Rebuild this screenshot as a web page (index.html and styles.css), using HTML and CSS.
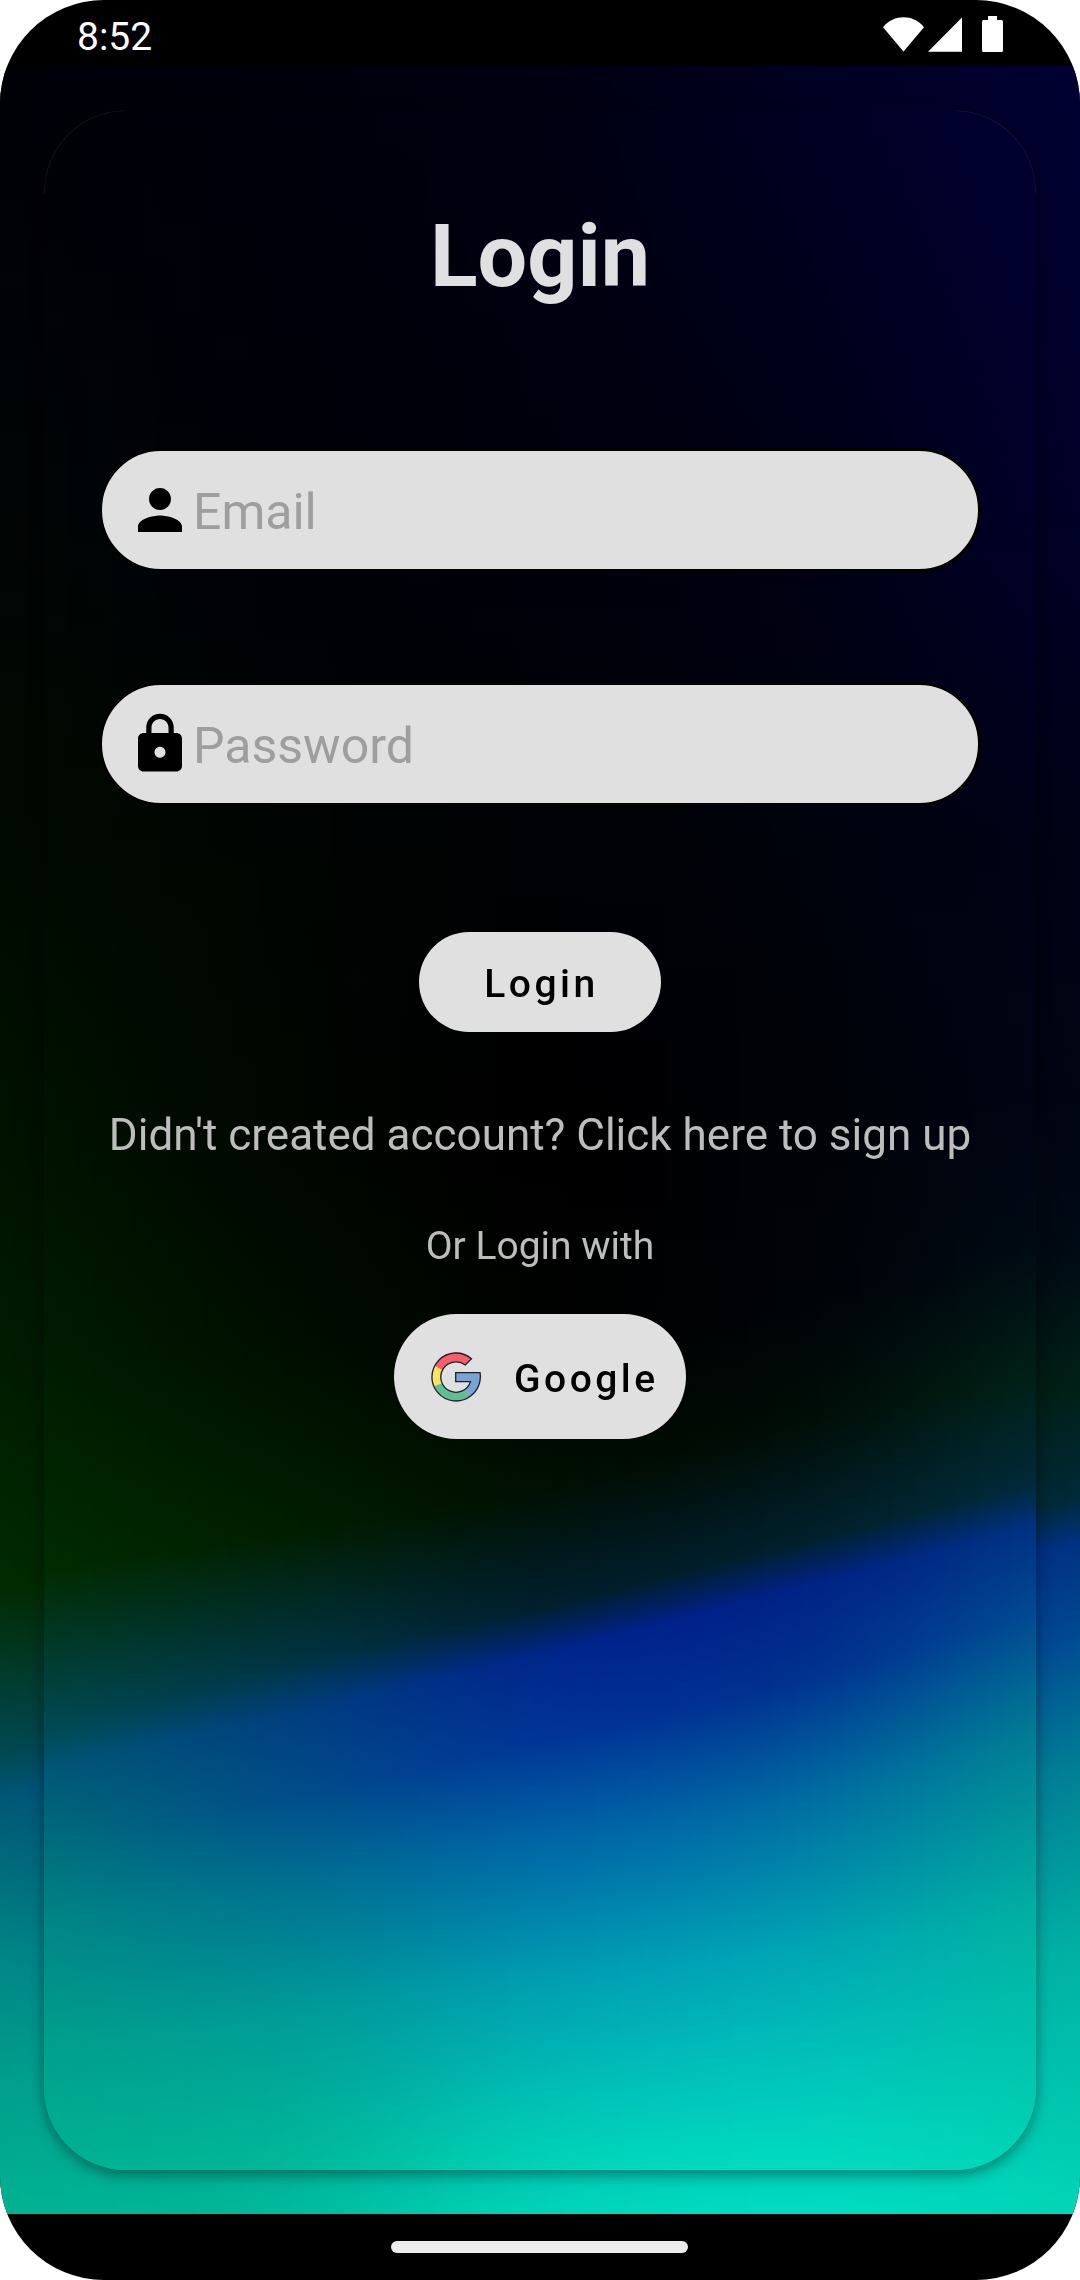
FILE: index.html
```html
<!DOCTYPE html>
<html lang="en">
<head>
<meta charset="utf-8">
<title>Login</title>
<link rel="stylesheet" href="styles.css">
</head>
<body>
<div class="phone">
  <header class="status-bar">
    <span class="clock">8:52</span>
    <svg class="status-icons" viewBox="0 0 122 38" aria-hidden="true">
      <path d="M1 12.2C6.500 5.500 14 2.300 21.500 2.300S36.500 5.500 42 12.200L21.500 36.600z"/>
      <path d="M80 2.500V36.800H46z"/>
      <path d="M106 1h9v4h4.500q1.500 0 1.500 1.500v29q0 1.500-1.500 1.500h-18q-1.500 0-1.500-1.500v-29q0-1.500 1.500-1.500h4.500z"/>
    </svg>
  </header>

  <main class="screen">
    <canvas class="backdrop" id="screen-backdrop" width="1080" height="2148"></canvas>
    <section class="card">
      <canvas class="backdrop card-backdrop" id="card-backdrop" width="992" height="2060"></canvas>
      <form class="form">
        <h1 class="title">Login</h1>
        <label class="field">
          <svg class="field-icon" viewBox="0 0 24 24" aria-hidden="true"><path d="M12 12c2.210 0 4-1.790 4-4s-1.790-4-4-4-4 1.790-4 4 1.790 4 4 4zm0 2c-2.670 0-8 1.340-8 4v2h16v-2c0-2.660-5.330-4-8-4z"/></svg>
          <input class="field-input" type="email" placeholder="Email">
        </label>
        <label class="field">
          <svg class="field-icon" viewBox="0 0 24 24" aria-hidden="true"><path d="M18 8h-1V6c0-2.760-2.240-5-5-5S7 3.240 7 6v2H6c-1.100 0-2 .9-2 2v10c0 1.100.9 2 2 2h12c1.100 0 2-.9 2-2V10c0-1.100-.9-2-2-2zm-6 9c-1.100 0-2-.9-2-2s.9-2 2-2 2 .9 2 2-.9 2-2 2zm3.100-9H8.900V6c0-1.710 1.390-3.100 3.100-3.100 1.710 0 3.100 1.390 3.100 3.100v2z"/></svg>
          <input class="field-input" type="password" placeholder="Password">
        </label>
        <button class="button button-login" type="button">Login</button>
        <p class="signup">Didn't created account? Click here to sign up</p>
        <p class="alternative">Or Login with</p>
        <button class="button button-google" type="button">
          <svg class="google-logo" viewBox="-25 -25 50 50" aria-hidden="true">
            <path fill="#f65e6e" d="M15.500-18.300A24 24 0 0 0-21.300-11L-13.600-6.800A15.200 15.200 0 0 1 9.300-12z"/>
            <path fill="#fbe560" d="M-21.300-11A24 24 0 0 0-22.200 9.200L-13.900 6.200A15.200 15.200 0 0 1-13.600-6.800z"/>
            <path fill="#60be92" d="M-22.200 9.200A24 24 0 0 0 14.600 19L9.200 12.100A15.200 15.200 0 0 1-13.900 6.200z"/>
            <path fill="#78a3d4" d="M14.600 19A24 24 0 0 0 24-4.300H-.3V4.600H14.500A15.200 15.200 0 0 1 9.200 12.100z"/>
            <path class="logo-outline" d="M15.500-18.300A24 24 0 1 0 14.600 19A24 24 0 0 0 24-4.300H-.3V4.600H14.500A15.200 15.200 0 1 1 9.300-12z"/>
          </svg>
          <span>Google</span>
        </button>
      </form>
    </section>
  </main>

  <footer class="nav-bar"><span class="handle"></span></footer>
</div>
<script src="backdrop.js"></script>
</body>
</html>
```
FILE: styles.css
```css
* {
  box-sizing: border-box;
}

body {
  margin: 0;
  background: #fff;
  font-family: Roboto, "Liberation Sans", sans-serif;
}

.phone {
  display: flex;
  flex-direction: column;
  width: 1080px;
  height: 2280px;
  border-radius: 104px;
  overflow: hidden;
  background: #000;
}

.status-bar {
  display: flex;
  justify-content: space-between;
  align-items: flex-start;
  height: 66px;
  padding: 15px 76px 0 77px;
  color: #fff;
}

.clock {
  margin-top: -1px;
  font-size: 39px;
  line-height: 46px;
}

.status-icons {
  width: 122px;
  height: 38px;
  fill: #fff;
}

.screen {
  position: relative;
  height: 2148px;
  padding: 44px;
}

.backdrop {
  position: absolute;
  inset: 0;
  width: 100%;
  height: 100%;
}

.card {
  position: relative;
  height: 2060px;
  border-radius: 82px;
  box-shadow: 0 5px 14px rgba(0, 0, 0, 0.38);
}

.card-backdrop {
  border-radius: 82px;
}

/* Faint highlight along the two upper corners */
.card::after {
  content: "";
  position: absolute;
  inset: 0 0 auto;
  height: 82px;
  border: 1px solid rgba(255, 255, 255, 0.07);
  border-bottom: 0;
  border-radius: 82px 82px 0 0;
  -webkit-mask: linear-gradient(90deg, #000 78px, transparent 82px, transparent 910px, #000 914px);
  mask: linear-gradient(90deg, #000 78px, transparent 82px, transparent 910px, #000 914px);
}

.form {
  position: relative;
  display: flex;
  flex-direction: column;
  align-items: center;
  padding: 94px 55px 0;
}

.title {
  margin: 0 0 140px;
  font-size: 88px;
  font-weight: 700;
  line-height: 104px;
  color: #e0e0e0;
}

.field {
  display: flex;
  align-items: center;
  width: 882px;
  height: 124px;
  padding-left: 25px;
  border: 3px solid #000;
  border-radius: 62px;
  background: #e0e0e0;
}

.field + .field {
  margin-top: 110px;
}

.field-icon {
  flex: none;
  width: 66px;
  height: 66px;
}

.field-input {
  flex: 1;
  height: 100%;
  padding: 4px 40px 0 0;
  border: 0;
  outline: 0;
  background: none;
  font: 50px Roboto, "Liberation Sans", sans-serif;
}

.field-input::placeholder {
  color: #9e9e9e;
  opacity: 1;
}

.button {
  display: flex;
  align-items: center;
  border: 0;
  background: #e0e0e0;
  color: #000;
  font: 500 39px/46px Roboto, "Liberation Sans", sans-serif;
  letter-spacing: 0.0893em;
}

.button-login {
  justify-content: center;
  width: 242px;
  height: 100px;
  margin-top: 126px;
  padding: 4px 0 0 3px;
  border-radius: 50px;
}

.signup {
  margin: 77px 0 0;
  font-size: 44px;
  line-height: 52px;
  color: #bdbdbd;
  white-space: nowrap;
}

.alternative {
  margin: 62px 0 0;
  font-size: 39px;
  line-height: 46px;
  color: #bdbdbd;
}

.button-google {
  gap: 33px;
  width: 292px;
  height: 125px;
  margin-top: 45px;
  padding: 0 0 0 37px;
  border-radius: 62.5px;
}

.button-google span {
  padding-top: 4px;
}

.google-logo {
  flex: none;
  width: 50px;
  height: 50px;
}

.logo-outline {
  fill: none;
  stroke: #1d1f2b;
  stroke-width: 1.3;
}

.nav-bar {
  display: flex;
  justify-content: center;
  height: 66px;
  padding: 27px 1px 0 0;
}

.handle {
  width: 297px;
  height: 12px;
  border-radius: 6px;
  background: #ececec;
}
```
FILE: backdrop.js
```js
// Mesh gradient: each column lists [position, r, g, b] stops from top to bottom.
// Columns are evenly spaced; positions and colours follow a smooth curve between them.
const columns = [
  [[0,0,0,8],[.2,0,5,5],[.35,0,9,0],[.5,0,18,0],[.6,0,27,0],[.708,0,43,0],[.787,0,74,84],[.805,0,86,118],[.836,0,106,122],[.881,0,134,134],[.942,0,160,140],[1,0,178,146]],
  [[0,0,0,12],[.2,0,0,8],[.35,0,4,2],[.5,0,6,0],[.6,0,14,0],[.690,0,30,0],[.753,0,52,66],[.778,0,62,126],[.820,0,78,138],[.860,0,112,144],[.925,0,156,152],[1,0,186,154]],
  [[0,0,0,18],[.2,0,0,12],[.35,0,2,5],[.5,0,0,0],[.6,0,3,0],[.669,0,16,2],[.727,0,32,46],[.750,0,38,138],[.792,0,54,150],[.836,0,98,164],[.905,0,156,176],[1,0,212,182]],
  [[0,0,0,34],[.2,0,0,20],[.35,0,2,12],[.5,0,2,6],[.58,0,3,7],[.638,0,13,6],[.697,0,32,44],[.719,0,34,134],[.764,0,50,144],[.822,0,108,162],[.895,0,166,180],[1,0,220,192]],
  [[0,0,0,50],[.2,0,0,40],[.35,0,2,22],[.48,0,4,18],[.55,0,10,20],[.613,0,32,22],[.666,0,42,56],[.688,0,50,130],[.730,0,74,146],[.790,0,126,148],[.875,0,176,162],[1,0,214,182]]
];

function curve(p0, p1, p2, p3, t) {
  return p1 + 0.5 * t * (p2 - p0 + t * (2 * p0 - 5 * p1 + 4 * p2 - p3 + t * (3 * (p1 - p2) + p3 - p0)));
}

function stopsAt(u) {
  const last = columns.length - 1;
  const i = Math.min(Math.floor(u * last), last - 1);
  const t = u * last - i;
  const b = columns[i];
  const c = columns[i + 1];
  return b.map((stop, k) => stop.map((value, j) => {
    const next = c[k][j];
    const before = i > 0 ? columns[i - 1][k][j] : 2 * value - next;
    const after = i + 2 <= last ? columns[i + 2][k][j] : 2 * next - value;
    return Math.max(0, curve(before, value, next, after, t));
  }));
}

function paint(canvas) {
  const ctx = canvas.getContext("2d");
  const { width, height } = canvas;
  for (let x = 0; x < width; x++) {
    const gradient = ctx.createLinearGradient(0, 0, 0, height);
    for (const [v, r, g, b] of stopsAt(x / (width - 1))) {
      gradient.addColorStop(Math.min(v, 1), `rgb(${r}, ${g}, ${b})`);
    }
    ctx.fillStyle = gradient;
    ctx.fillRect(x, 0, 1, height);
  }
}

paint(document.getElementById("screen-backdrop"));
paint(document.getElementById("card-backdrop"));
```
